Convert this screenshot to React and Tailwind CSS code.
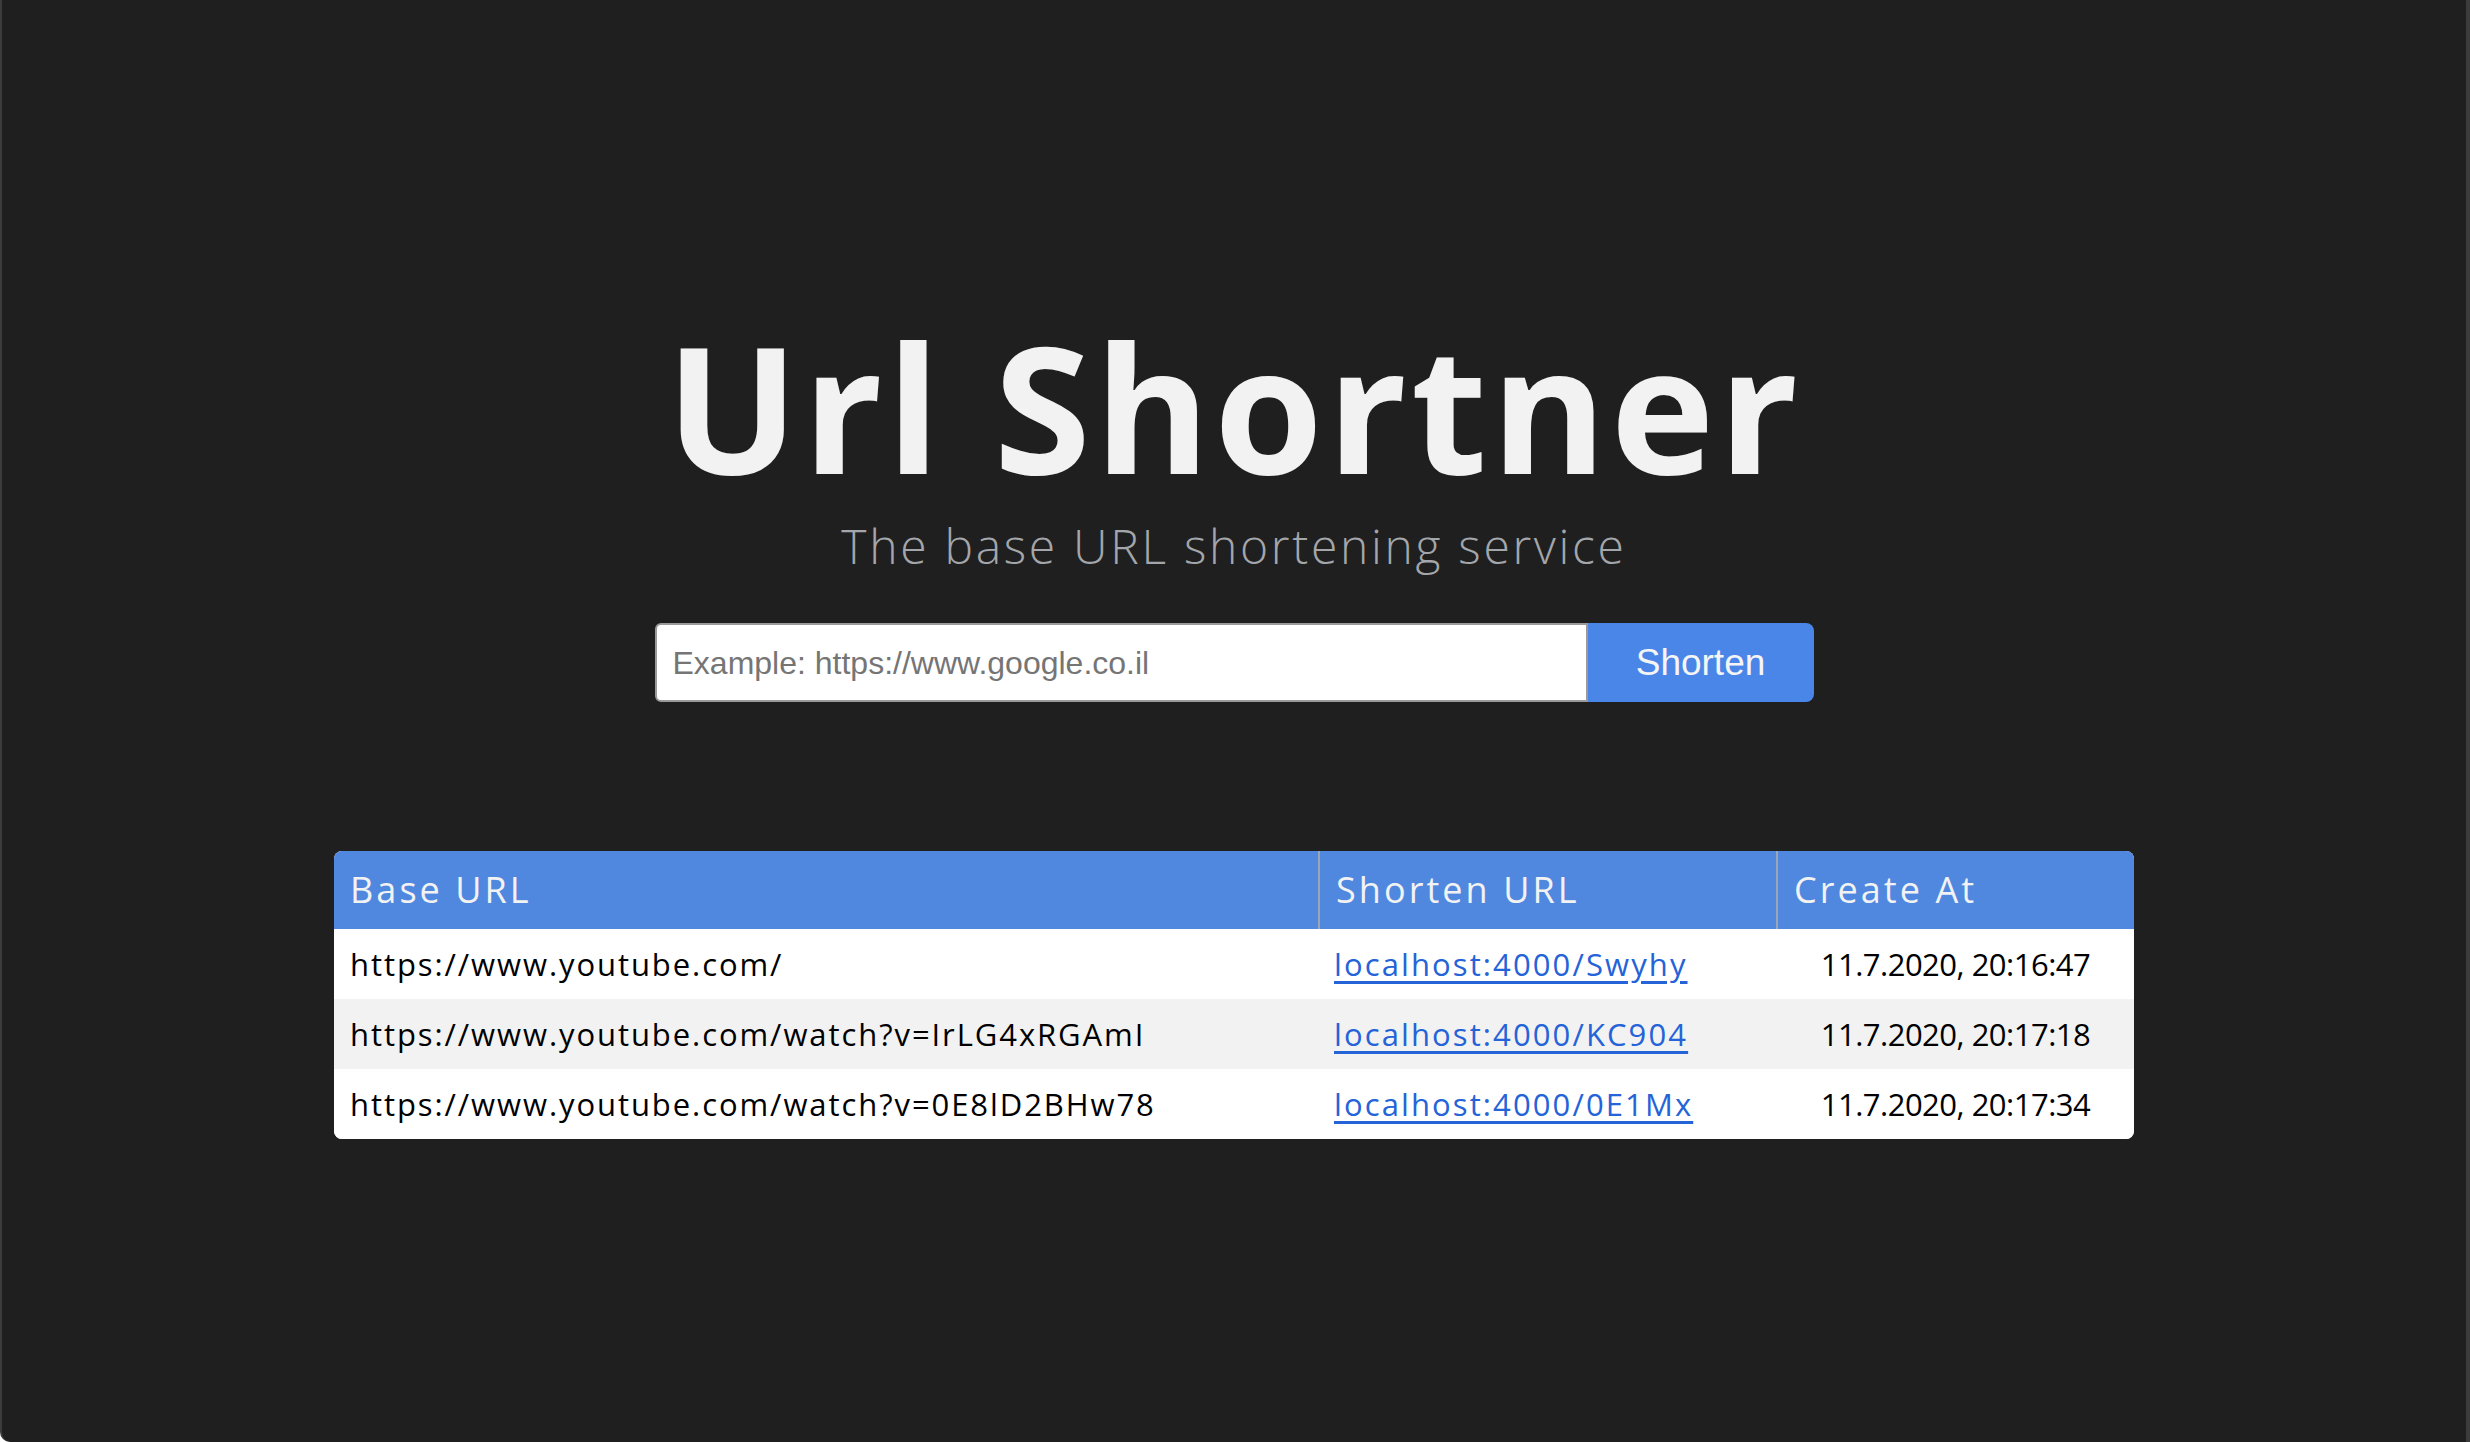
import { useState } from 'react'

const rows = [
  {
    base: 'https://www.youtube.com/',
    short: 'localhost:4000/Swyhy',
    created: '11.7.2020, 20:16:47',
  },
  {
    base: 'https://www.youtube.com/watch?v=IrLG4xRGAmI',
    short: 'localhost:4000/KC904',
    created: '11.7.2020, 20:17:18',
  },
  {
    base: 'https://www.youtube.com/watch?v=0E8lD2BHw78',
    short: 'localhost:4000/0E1Mx',
    created: '11.7.2020, 20:17:34',
  },
]

const Header = () => {
  return (
    <div className="flex flex-col items-center">
      <h1 className="text-[176px] leading-none font-bold text-[#f2f2f2] tracking-[0.022em]">
        Url Shortner
      </h1>
      <p className="mt-[28px] text-[48px] leading-none font-light text-[#a3a6aa] tracking-[0.056em]">
        The base URL shortening service
      </p>
    </div>
  )
}

const ShortenForm = () => {
  const [url, setUrl] = useState('')

  return (
    <div className="flex mt-[53px] h-[79px] w-[1159px]">
      <input
        value={url}
        onChange={(e) => setUrl(e.target.value)}
        placeholder="Example: https://www.google.co.il"
        className="flex-1 bg-white border-2 border-[#9a9a9a] rounded-l-[6px] px-[16px] text-[32px] text-black placeholder:text-[#757575] outline-none font-['Liberation_Sans',sans-serif]"
      />
      <button className="w-[226px] bg-[#4a86e8] text-[#f5f5f5] text-[37px] rounded-r-[8px] font-['Liberation_Sans',sans-serif]">
        Shorten
      </button>
    </div>
  )
}

const UrlTable = () => {
  return (
    <div className="mt-[149px] w-[1800px] rounded-[8px] overflow-hidden bg-white">
      <table className="w-full border-collapse table-fixed">
        <colgroup>
          <col className="w-[985px]" />
          <col className="w-[458px]" />
          <col className="w-[357px]" />
        </colgroup>
        <thead>
          <tr className="bg-[#5088e0] h-[78px] text-[#f2f2f2] text-[36px] text-left tracking-[0.085em]">
            <th className="font-normal px-[16px]">Base URL</th>
            <th className="font-normal px-[16px] border-l-2 border-[#9aa6b8]">Shorten URL</th>
            <th className="font-normal px-[16px] border-l-2 border-[#9aa6b8]">Create At</th>
          </tr>
        </thead>
        <tbody className="text-[31px] text-black">
          {rows.map((row, i) => (
            <tr key={row.short} className={'h-[70px] ' + (i % 2 === 1 ? 'bg-[#f2f2f2]' : 'bg-white')}>
              <td className="px-[16px] whitespace-nowrap tracking-[0.062em]">{row.base}</td>
              <td className="px-[15px] tracking-[0.068em]">
                <a href="#" className="text-[#2563d8] underline underline-offset-[5px]">
                  {row.short}
                </a>
              </td>
              <td className="text-center tracking-[-0.5px]">{row.created}</td>
            </tr>
          ))}
        </tbody>
      </table>
    </div>
  )
}

const App = () => {
  return (
    <div className="w-[2470px] h-[1442px] bg-[#1f1f1f] border-l-2 border-r-4 border-[#3c3c3c] rounded-bl-[10px] flex flex-col items-center pt-[318px] font-['Open_Sans',sans-serif] overflow-hidden">
      <Header />
      <ShortenForm />
      <UrlTable />
    </div>
  )
}

export default App
